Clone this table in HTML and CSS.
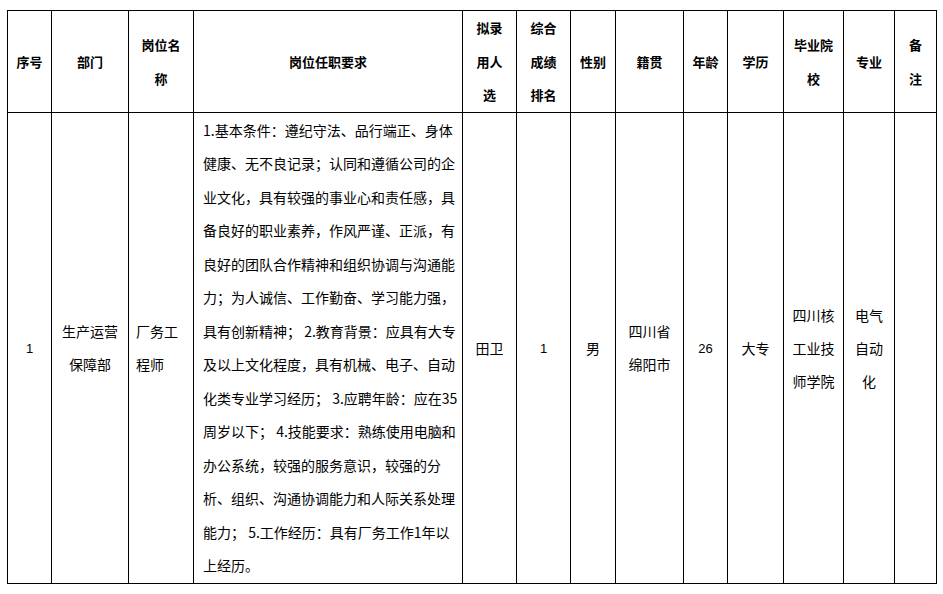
FILE: index.html
```html
<!DOCTYPE html>
<html lang="zh-CN">
<head>
<meta charset="utf-8">
<title>岗位表</title>
<link rel="stylesheet" href="styles.css">
</head>
<body>
<table class="grid">
  <colgroup>
    <col class="c44"><col class="c77"><col class="c65"><col class="c269">
    <col class="c54"><col class="c54"><col class="c45"><col class="c68">
    <col class="c44"><col class="c56"><col class="c60"><col class="c51"><col class="c42">
  </colgroup>
  <thead>
    <tr class="head">
      <th>序号</th>
      <th>部门</th>
      <th>岗位名<br>称</th>
      <th>岗位任职要求</th>
      <th>拟录<br>用人<br>选</th>
      <th>综合<br>成绩<br>排名</th>
      <th>性别</th>
      <th>籍贯</th>
      <th>年龄</th>
      <th>学历</th>
      <th>毕业院<br>校</th>
      <th>专业</th>
      <th>备<br>注</th>
    </tr>
  </thead>
  <tbody>
    <tr class="body">
      <td class="num">1</td>
      <td>生产运营<br>保障部</td>
      <td class="left">厂务工<br>程师</td>
      <td class="req">1.基本条件：遵纪守法、品行端正、身体<br>健康、无不良记录；认同和遵循公司的企<br>业文化，具有较强的事业心和责任感，具<br>备良好的职业素养，作风严谨、正派，有<br>良好的团队合作精神和组织协调与沟通能<br>力；为人诚信、工作勤奋、学习能力强，<br>具有创新精神； 2.教育背景：应具有大专<br>及以上文化程度，具有机械、电子、自动<br>化类专业学习经历； 3.应聘年龄：应在35<br>周岁以下； 4.技能要求：熟练使用电脑和<br>办公系统，较强的服务意识，较强的分<br>析、组织、沟通协调能力和人际关系处理<br>能力； 5.工作经历：具有厂务工作1年以<br>上经历。</td>
      <td>田卫</td>
      <td class="num">1</td>
      <td>男</td>
      <td>四川省<br>绵阳市</td>
      <td class="num">26</td>
      <td>大专</td>
      <td>四川核<br>工业技<br>师学院</td>
      <td>电气<br>自动<br>化</td>
      <td></td>
    </tr>
  </tbody>
</table>
</body>
</html>
```
FILE: styles.css
```css
html, body {
  margin: 0;
  padding: 0;
  background: #ffffff;
}

.grid {
  margin: 10px 0 0 7px;
  border-collapse: collapse;
  table-layout: fixed;
  width: 930px;
  font-family: "Noto Sans CJK SC", "Noto Sans", sans-serif;
  color: #000000;
}

.c44 { width: 44px; }
.c77 { width: 77px; }
.c65 { width: 65px; }
.c269 { width: 269px; }
.c54 { width: 54px; }
.c45 { width: 45px; }
.c68 { width: 68px; }
.c56 { width: 56px; }
.c60 { width: 60px; }
.c51 { width: 51px; }
.c42 { width: 42px; }

.grid th,
.grid td {
  border: 1px solid #000000;
  padding: 0;
  text-align: center;
  vertical-align: middle;
  white-space: nowrap;
}

.head th {
  height: 101px;
  font-size: 13px;
  font-weight: 700;
  line-height: 33.6px;
}

.body td {
  height: 470px;
  font-size: 14px;
  font-weight: 400;
  line-height: 33px;
}

.body td.num {
  font-family: "Liberation Sans", "Noto Sans", sans-serif;
  font-size: 13px;
}

.body td.left {
  text-align: left;
  padding-left: 7px;
}

.body td.req {
  text-align: left;
  padding-left: 9px;
  line-height: 33.5px;
}
```
